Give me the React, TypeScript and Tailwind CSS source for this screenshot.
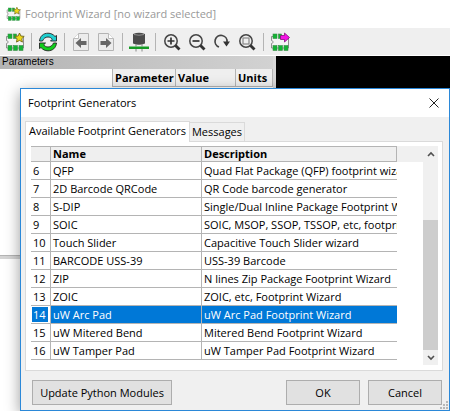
import type { ReactNode } from "react";

const rows: [number, string, string][] = [
  [6, "QFP", "Quad Flat Package (QFP) footprint wizard"],
  [7, "2D Barcode QRCode", "QR Code barcode generator"],
  [8, "S-DIP", "Single/Dual Inline Package Footprint Wizard"],
  [9, "SOIC", "SOIC, MSOP, SSOP, TSSOP, etc, footprint wizard"],
  [10, "Touch Slider", "Capacitive Touch Slider wizard"],
  [11, "BARCODE USS-39", "USS-39 Barcode"],
  [12, "ZIP", "N lines Zip Package Footprint Wizard"],
  [13, "ZOIC", "ZOIC, etc, Footprint Wizard"],
  [14, "uW Arc Pad", "uW Arc Pad Footprint Wizard"],
  [15, "uW Mitered Bend", "Mitered Bend Footprint Wizard"],
  [16, "uW Tamper Pad", "uW Tamper Pad Footprint Wizard"],
];
const selectedRow = 14;

function Chip({ mark, className }: { mark: "star" | "arrow"; className: string }) {
  return (
    <svg viewBox="0 0 20 20" className={className} aria-hidden="true">
      <path d="M3 4.500H1.500v4c2 0 2 3 0 3V16h17V5" fill="#f4f4f4" stroke="#777" strokeWidth=".8" />
      <g fill="#12b433" stroke="#3c8a4a" strokeWidth=".6">
        <rect x="3" y="2" width="4" height="4.500" />
        <rect x="8.500" y="2" width="3" height="4.500" />
        <rect x="3" y="13.500" width="4" height="5" />
        <rect x="8.500" y="13.500" width="4" height="5" />
        <rect x="14" y="13.500" width="4" height="5" />
      </g>
      {mark === "star" ? (
        <path d="M14.500 1l1.400 3 3.300.4-2.400 2.300.6 3.400-2.900-1.700-3 1.700.6-3.400L9.700 4.400l3.400-.4z" fill="#eed81a" stroke="#6e6517" strokeWidth=".9" />
      ) : (
        <path d="M10.500 3.500h4V1l5 4.500-5 4.500V7.500h-4z" fill="#f414e4" stroke="#84107c" strokeWidth=".8" />
      )}
    </svg>
  );
}

function Reload() {
  return (
    <svg viewBox="0 0 20 20" className="size-5" aria-hidden="true">
      <path d="M1.500 9C2 4 5.500 1.200 10 1.200c3 0 5.300 1.300 7 3.300l1.500-1v5.500h-6l1.800-1.800C13.200 5.800 11.800 5 10 5 7.500 5 5.500 6.500 4.500 9z" fill="#1fcfd0" stroke="#222" strokeWidth=".9" strokeLinejoin="round" />
      <path d="M18.500 11c-.500 5-4 7.800-8.500 7.800-3 0-5.300-1.300-7-3.300l-1.500 1V11h6l-1.800 1.800C6.800 14.200 8.200 15 10 15c2.500 0 4.500-1.500 5.500-4z" fill="#11cf1c" stroke="#222" strokeWidth=".9" strokeLinejoin="round" />
    </svg>
  );
}

function PageArrow({ forward = false }: { forward?: boolean }) {
  return (
    <svg viewBox="0 0 18 20" className="h-5 w-[18px]" aria-hidden="true">
      <path d={forward ? "M1.500 1.500h10l5 5v12h-15z" : "M16.500 1.500h-10l-5 5v12h15z"} fill="#ececec" stroke="#b4b4b4" />
      <path d={forward ? "M11.500 1.500v5h5" : "M6.500 1.500v5h-5"} fill="#fff" stroke="#bbb" />
      <path d={forward ? "M3.500 9H9V6l5.500 5L9 16v-3H3.500z" : "M14.500 9H9V6l-5.500 5L9 16v-3h5.500z"} fill="#666" />
    </svg>
  );
}

function Pad() {
  return (
    <svg viewBox="0 0 20 20" className="size-5" aria-hidden="true">
      <path d="M4 2q6-2.500 12 0v9.500q-6 2.500-12 0z" fill="#4b4b4b" />
      <path d="M5 2.500q5 1.500 10 0" stroke="#909090" fill="none" />
      <path d="M7 12.500v2M13 12.500v2" stroke="#888" />
      <path d="M0 14.500h20V17H0z" fill="#159b24" />
      <path d="M7 17v2.500M13 17v2.500" stroke="#888" />
    </svg>
  );
}

function Zoom({ kind }: { kind: "in" | "out" | "fit" }) {
  return (
    <svg viewBox="0 0 18 18" className="size-[18px]" fill="none" aria-hidden="true">
      <circle cx="8" cy="8" r="6.200" stroke="#444" strokeWidth="1.500" />
      <path d="M12.500 12.500l4 4" stroke="#333" strokeWidth="2.800" />
      {kind === "fit" ? (
        <rect x="5" y="5" width="6" height="6" stroke="#888" strokeWidth="1.200" />
      ) : (
        <path d={kind === "in" ? "M4.500 8h7M8 4.500v7" : "M4.500 8h7"} stroke="#333" strokeWidth="1.700" />
      )}
    </svg>
  );
}

function Redraw() {
  return (
    <svg viewBox="0 0 18 18" className="size-[18px]" fill="none" aria-hidden="true">
      <path d="M6 14A6 6 0 1 1 14 9" stroke="#444" strokeWidth="1.700" />
      <path d="M10 8.500h7l-3.500 5z" fill="#333" />
    </svg>
  );
}

function Tool({ label, children }: { label: string; children: ReactNode }) {
  return (
    <button type="button" aria-label={label} className="flex w-5 shrink-0 items-center justify-center">
      {children}
    </button>
  );
}

function Divider() {
  return <span className="h-[18px] w-px shrink-0 bg-[#b4b4b4]" />;
}

function PushButton({ children, className }: { children: ReactNode; className: string }) {
  return (
    <button type="button" className={`h-[25px] border border-[#adadad] bg-[#e1e1e1] ${className}`}>
      {children}
    </button>
  );
}

function GeneratorTable() {
  return (
    <table className="w-[366px] shrink-0 table-fixed border-separate border-spacing-0 text-left">
      <colgroup>
        <col className="w-5" />
        <col className="w-[151px]" />
        <col />
      </colgroup>
      <thead>
        <tr className="h-4 bg-[#efefef] leading-[14px]">
          <th aria-label="Row" className="border-t border-r border-b border-[#b4b4b4] p-0" />
          <th className="border-t border-r border-b border-[#b4b4b4] py-0 pr-0 pl-0.5 font-bold">Name</th>
          <th className="border-t border-r border-b border-[#b4b4b4] py-0 pr-0 pl-0.5 font-bold">Description</th>
        </tr>
      </thead>
      <tbody>
        {rows.map(([number, name, description]) => {
          const selected = number === selectedRow;
          const fill = selected ? "bg-[#0078d7] text-white" : "bg-white";
          return (
            <tr key={number} aria-selected={selected} className="h-[18px] leading-[17px]">
              <td className="border-r border-b border-[#b4b4b4] p-0">
                <span className={`block ${selected ? "mr-0.5 ml-px h-[15px] bg-[#0078d7] pl-px leading-[15px] text-white" : "pl-0.5"}`}>{number}</span>
              </td>
              <td className={`overflow-hidden border-r border-b border-[#b4b4b4] py-0 pr-0 pl-0.5 whitespace-nowrap ${fill}`}>{name}</td>
              <td className={`overflow-hidden border-b border-[#b4b4b4] py-0 pr-0 pl-0.5 whitespace-nowrap ${fill}`}>{description}</td>
            </tr>
          );
        })}
      </tbody>
    </table>
  );
}

function ScrollBar() {
  return (
    <div className="flex w-[15px] shrink-0 flex-col bg-[#f0f0f0]">
      <button type="button" aria-label="Scroll up" className="flex h-4 items-center justify-center">
        <svg viewBox="0 0 8 6" className="h-1.5 w-2" fill="none" aria-hidden="true">
          <path d="M1 5l3-3 3 3" stroke="#505050" strokeWidth="1.600" />
        </svg>
      </button>
      <div className="grow" />
      <div className="h-[130px] bg-[#cdcdcd]" />
      <button type="button" aria-label="Scroll down" className="flex h-[15px] items-center justify-center">
        <svg viewBox="0 0 8 6" className="h-1.5 w-2" fill="none" aria-hidden="true">
          <path d="M1 1l3 3 3-3" stroke="#505050" strokeWidth="1.600" />
        </svg>
      </button>
    </div>
  );
}

function GeneratorDialog() {
  return (
    <section
      role="dialog"
      aria-label="Footprint Generators"
      className="absolute top-[88px] right-0 left-5 border border-[#2b88d8] bg-[#f0f0f0] shadow-[0_4px_14px_rgba(0,0,0,0.4)]"
    >
      <header className="flex h-7 items-center justify-between bg-white pr-2.5 pl-[7px]">
        <h2>Footprint Generators</h2>
        <button type="button" aria-label="Close">
          <svg viewBox="0 0 10 10" className="size-2.5" aria-hidden="true">
            <path d="M.5.5l9 9M9.500.5l-9 9" stroke="#222" />
          </svg>
        </button>
      </header>
      <div className="pt-1 pr-1.5 pl-1">
        <div role="tablist" className="flex items-end">
          <button type="button" role="tab" aria-selected="true" className="relative z-10 -mb-px h-[21px] w-[165px] border border-b-0 border-[#dadada] bg-white pb-0.5">
            Available Footprint Generators
          </button>
          <button type="button" role="tab" aria-selected="false" className="h-[19px] w-[55px] border border-b-0 border-l-0 border-[#dadada]">
            Messages
          </button>
        </div>
        <div role="tabpanel" className="flex border border-[#dadada] bg-white pt-1 pr-1 pb-[5px] pl-[5px]">
          <div className="pb-[5px]">
            <GeneratorTable />
          </div>
          <div className="grow">
            <div className="h-4 bg-[#f0f0f0]" />
          </div>
          <ScrollBar />
        </div>
      </div>
      <footer className="flex gap-2 pt-[9px] pr-[7px] pb-[5px] pl-[11px]">
        <PushButton className="w-[140px]">Update Python Modules</PushButton>
        <div className="grow" />
        <PushButton className="w-[74px]">OK</PushButton>
        <PushButton className="w-[74px]">Cancel</PushButton>
      </footer>
      <svg viewBox="0 0 8 8" className="absolute right-px bottom-px size-2" fill="#b8b8b8" aria-hidden="true">
        <path d="M6 0h2v2H6zM3 3h2v2H3zM6 3h2v2H6zM0 6h2v2H0zM3 6h2v2H3zM6 6h2v2H6z" />
      </svg>
    </section>
  );
}

export default function App() {
  return (
    <div className="relative flex min-h-screen flex-col overflow-hidden bg-white font-['Open_Sans','Noto_Sans',sans-serif] text-[11px] leading-4 text-black">
      <header className="flex h-7 items-center gap-1 pl-1.5 text-[#999]">
        <Chip mark="star" className="h-4 w-[15px]" />
        <h1>Footprint Wizard [no wizard selected]</h1>
      </header>
      <nav aria-label="Toolbar" className="flex h-[27px] shrink-0 items-center gap-1.5 bg-[#efefef] pl-[5px]">
        <Tool label="New wizard"><Chip mark="star" className="size-5" /></Tool>
        <Divider />
        <Tool label="Reset"><Reload /></Tool>
        <Divider />
        <div className="flex gap-[5px]">
          <Tool label="Previous page"><PageArrow /></Tool>
          <Tool label="Next page"><PageArrow forward /></Tool>
        </div>
        <Divider />
        <Tool label="3D view"><Pad /></Tool>
        <Divider />
        <div className="flex gap-[5px]">
          <Tool label="Zoom in"><Zoom kind="in" /></Tool>
          <Tool label="Zoom out"><Zoom kind="out" /></Tool>
          <Tool label="Redraw"><Redraw /></Tool>
          <Tool label="Zoom to fit"><Zoom kind="fit" /></Tool>
        </div>
        <Divider />
        <Tool label="Export footprint"><Chip mark="arrow" className="size-5" /></Tool>
      </nav>
      <main className="flex grow pt-px">
        <div className="flex w-[273px] shrink-0 flex-col">
          <h2 className="h-[13px] bg-linear-to-r from-[#b4b4b4] to-[#d2d2d2] pl-0.5 font-['Liberation_Sans',sans-serif] text-[10px] leading-3">Parameters</h2>
          <div className="flex h-[186px]">
            <div className="grow" />
            <table className="h-[18px] w-[161px] table-fixed border-separate border-spacing-0 border-l border-[#b4b4b4] bg-[#efefef] text-left leading-4">
              <thead>
                <tr>
                  <th className="w-[63px] border-r border-b border-[#b4b4b4] py-0 pr-0 pl-0.5">Parameter</th>
                  <th className="w-[60px] border-r border-b border-[#b4b4b4] py-0 pr-0 pl-0.5">Value</th>
                  <th className="border-r border-b border-[#b4b4b4] py-0 pr-0 pl-0.5">Units</th>
                </tr>
              </thead>
            </table>
          </div>
          <div className="h-1 border-t border-[#b4b4b4] bg-[#d4d4d4]" />
        </div>
        <div className="w-[3px] bg-[#d8d8d8]" />
        <div className="grow bg-black" />
      </main>
      <GeneratorDialog />
    </div>
  );
}
